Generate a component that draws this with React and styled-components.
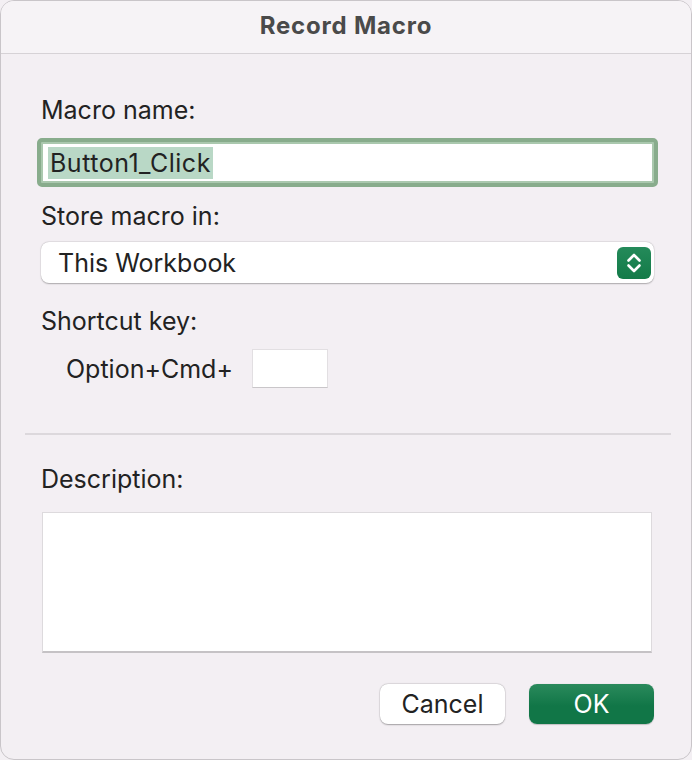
import React from 'react';
import styled, { createGlobalStyle } from 'styled-components';

const GlobalStyle = createGlobalStyle`
  html, body {
    margin: 0;
    padding: 0;
    background: #f3eff3;
  }
  * { box-sizing: border-box; }
`

const Window = styled.div`
  width: 692px;
  height: 760px;
  background: #f3eff3;
  border: 1px solid #c9c5c9;
  border-radius: 14px;
  overflow: hidden;
  font-family: Inter, "Noto Sans", sans-serif;
  color: #222222;
  display: flex;
  flex-direction: column;
`

const TitleBar = styled.div`
  height: 53px;
  flex: none;
  background: #f6f3f6;
  border-bottom: 1px solid #d6d2d6;
  display: flex;
  align-items: center;
  justify-content: center;
  font-size: 24px;
  font-weight: 700;
  letter-spacing: 0.8px;
  color: #4a4a4a;
  padding-bottom: 4px;
`

const Body = styled.div`
  display: flex;
  flex-direction: column;
  padding: 0 37px 0 40px;
`

const Label = styled.div`
  font-size: 25px;
  line-height: 30px;
  margin-top: ${p => p.top}px;
`

const FocusRing = styled.div`
  margin-top: 13px;
  margin-left: -4px;
  margin-right: -4px;
  height: 49px;
  border: 4px solid #88ac8c;
  border-radius: 5px;
  padding: 2px;
  background: #aac8ae;
`

const TextField = styled.div`
  height: 100%;
  background: #ffffff;
  display: flex;
  align-items: center;
  padding-left: 5px;
  font-size: 25px;
  letter-spacing: 0.5px;
`

const Selected = styled.span`
  background: #b9d8c6;
  line-height: 32px;
  padding: 0 2px 0 2px;
`

const Select = styled.div`
  margin-top: 11px;
  height: 41px;
  background: #ffffff;
  border-radius: 8px;
  box-shadow: 0 0.5px 1.5px rgba(0, 0, 0, 0.28), 0 0 0 0.5px rgba(0, 0, 0, 0.06);
  display: flex;
  align-items: center;
  justify-content: space-between;
  padding: 0 3px 0 17px;
  font-size: 25px;
`

const Stepper = styled.div`
  width: 34px;
  height: 32px;
  border-radius: 6px;
  background: linear-gradient(#248a5a, #137a48);
  display: flex;
  align-items: center;
  justify-content: center;
`

const ShortcutRow = styled.div`
  display: flex;
  align-items: center;
  gap: 19px;
  margin-top: 13px;
  padding-left: 25px;
  font-size: 25px;
`

const KeyBox = styled.div`
  width: 76px;
  height: 39px;
  background: #ffffff;
  border: 1px solid #e2dfe2;
  border-bottom-color: #c9c6c9;
`

const Separator = styled.hr`
  margin: 45px -17px 0 -16px;
  border: none;
  border-top: 2px solid #dcd8dc;
  height: 0;
`

const TextArea = styled.div`
  margin-top: 18px;
  margin-left: 1px;
  margin-right: 2px;
  height: 141px;
  background: #ffffff;
  border: 1px solid #dddadd;
  border-bottom: 2px solid #c5c2c5;
`

const Footer = styled.div`
  display: flex;
  justify-content: flex-end;
  gap: 24px;
  margin-top: 31px;
`

const Button = styled.div`
  width: 125px;
  height: 40px;
  border-radius: 8px;
  display: flex;
  align-items: center;
  justify-content: center;
  font-size: 25px;
  background: ${p => p.primary ? 'linear-gradient(#2a8a5c, #117647 55%)' : '#ffffff'};
  color: ${p => p.primary ? '#ffffff' : '#222222'};
  box-shadow: ${p => p.primary
    ? '0 0.5px 1px rgba(0, 0, 0, 0.2)'
    : '0 0.5px 1.5px rgba(0, 0, 0, 0.3), 0 0 0 0.5px rgba(0, 0, 0, 0.08)'};
`

export default function App() {
  return (
    <>
      <GlobalStyle />
      <Window>
        <TitleBar>Record Macro</TitleBar>
        <Body>
          <Label top={41}>Macro name:</Label>
          <FocusRing>
            <TextField>
              <Selected>Button1_Click</Selected>
            </TextField>
          </FocusRing>
          <Label top={14}>Store macro in:</Label>
          <Select>
            This Workbook
            <Stepper>
              <svg width="16" height="24" viewBox="0 0 16 24" fill="none" stroke="#ffffff" strokeWidth="2.6" strokeLinecap="round" strokeLinejoin="round">
                <path d="M2.5 9.5L8 4l5.5 5.5" />
                <path d="M2.5 14.5L8 20l5.5-5.5" />
              </svg>
            </Stepper>
          </Select>
          <Label top={23}>Shortcut key:</Label>
          <ShortcutRow>
            Option+Cmd+
            <KeyBox />
          </ShortcutRow>
          <Separator />
          <Label top={29}>Description:</Label>
          <TextArea />
          <Footer>
            <Button>Cancel</Button>
            <Button primary>OK</Button>
          </Footer>
        </Body>
      </Window>
    </>
  );
}
